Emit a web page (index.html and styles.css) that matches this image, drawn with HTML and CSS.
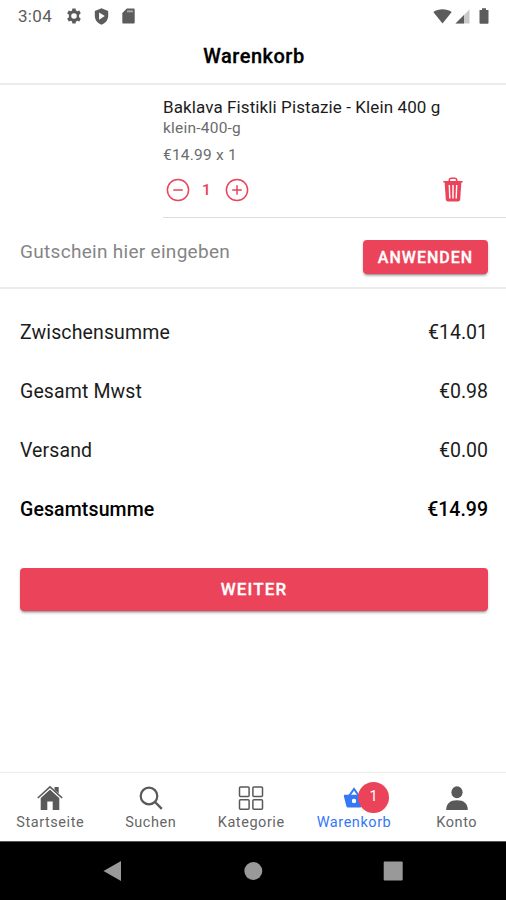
FILE: index.html
```html
<!DOCTYPE html>
<html lang="de">
<head>
<meta charset="utf-8">
<meta name="viewport" content="width=device-width">
<title>Warenkorb</title>
<link rel="stylesheet" href="styles.css">
</head>
<body>
<div class="screen">
  <div class="status">
    <span class="time">3:04</span>
    <svg class="s-gear" width="16" height="16" viewBox="0 0 16 16"><path fill-rule="evenodd" d="M6.4.5h3.2l.4 2.1 1.2.7 2-.8 1.6 2.8-1.7 1.4v2.6l1.7 1.4-1.6 2.8-2-.8-1.2.7-.4 2.1H6.400l-.4-2.100-1.200-.7-2 .8-1.600-2.800 1.700-1.400V6.700L1.200 5.300l1.600-2.800 2 .8L6 2.600zM8 5.200a2.800 2.800 0 1 0 0 5.600 2.800 2.800 0 0 0 0-5.600z"/></svg>
    <svg class="s-shield" width="15" height="17" viewBox="0 0 15 17"><path fill-rule="evenodd" d="M7.500.3l6.700 2.700v4.800c0 4-2.600 7.400-6.700 8.900C3.400 15.200.8 11.800.8 7.800V3zM5.100 4.400v7.300l5.700-3.600z"/></svg>
    <svg class="s-card" width="13" height="16" viewBox="0 0 13 16"><path fill-rule="evenodd" d="M4.800.5h6.700c.8 0 1.200.4 1.200 1.200v12.600c0 .8-.4 1.200-1.200 1.200h-10c-.8 0-1.200-.4-1.200-1.200V5z"/><path d="M5 2.400h6v1.900H5z" fill="#a8a8a8"/></svg>
    <span class="grow"></span>
    <svg class="s-wifi" width="19" height="15" viewBox="0 0 19 15"><path d="M.3 3C5.500-.6 13.500-.6 18.700 3L9.500 14.500z"/></svg>
    <svg class="s-signal" width="15" height="15" viewBox="0 0 15 15"><path d="M14.500.5v14H.5z" fill="#c9c9c9"/><path d="M9 6v8.500H.5z"/></svg>
    <svg class="s-battery" width="10" height="16" viewBox="0 0 10 16"><path d="M3 .3h4V2h2.500v12.800c0 .5-.3.900-.9.900H1.400c-.6 0-.9-.4-.9-.9V2H3z"/></svg>
  </div>
  <header class="header"><h1>Warenkorb</h1></header>
  <main>
    <section class="item">
      <div class="item-name">Baklava Fistikli Pistazie - Klein 400 g</div>
      <div class="item-variant">klein-400-g</div>
      <div class="item-price">€14.99 x 1</div>
      <div class="controls">
        <svg class="ring" width="24" height="24" viewBox="0 0 24 24"><circle cx="12" cy="12" r="10.600"/><path d="M7.200 12h9.600"/></svg>
        <span class="qty">1</span>
        <svg class="ring" width="24" height="24" viewBox="0 0 24 24"><circle cx="12" cy="12" r="10.600"/><path d="M7.200 12h9.600M12 7.200v9.600"/></svg>
        <span class="grow"></span>
        <svg class="trash" width="20" height="25" viewBox="0 0 20 25"><path d="M.3 4.700h19.400M6.300 4.500V3c0-1 .6-1.700 1.600-1.700h4.200c1 0 1.600.7 1.600 1.700v1.500" fill="none" stroke="#eb445a" stroke-width="1.600"/><path d="M1.600 5h16.800l-1.200 17.300c-.1 1.300-.9 2.100-2.200 2.100H5c-1.300 0-2.100-.8-2.200-2.100z" fill="#eb445a"/><path d="M6.300 8l.5 13.500M10 8v13.500M13.700 8l-.5 13.500" stroke="#fff" stroke-width="1.400" fill="none"/></svg>
      </div>
    </section>
    <section class="voucher">
      <span class="placeholder">Gutschein hier eingeben</span>
      <button class="btn apply">ANWENDEN</button>
    </section>
    <section class="totals">
      <div class="row"><span>Zwischensumme</span><span class="amount">€14.01</span></div>
      <div class="row"><span>Gesamt Mwst</span><span class="amount">€0.98</span></div>
      <div class="row"><span>Versand</span><span class="amount">€0.00</span></div>
      <div class="row total"><span>Gesamtsumme</span><span class="amount">€14.99</span></div>
    </section>
    <button class="btn next">WEITER</button>
  </main>
  <nav class="tabs">
    <div class="tab">
      <svg width="26" height="26" viewBox="0 0 26 26"><path d="M17.500 2h4.200v7l-4.200-3.800z"/><path d="M13 4.600l9.300 8.500V25h-6.600v-8.400h-5.400V25H3.700V13.100z"/><path d="M.8 13.500L13 2.600l12.200 10.900" fill="none" stroke="#fff" stroke-width="2.600"/><path d="M.8 13L13 1.900 25.200 13" fill="none" stroke="#595959" stroke-width="1.600"/></svg>
      <span>Startseite</span>
    </div>
    <div class="tab">
      <svg width="26" height="26" viewBox="0 0 26 26"><circle cx="11" cy="11" r="8.300" fill="none" stroke="#595959" stroke-width="2.200"/><path d="M17 17l6.800 6.800" stroke="#595959" stroke-width="2.400"/></svg>
      <span>Suchen</span>
    </div>
    <div class="tab">
      <svg width="26" height="26" viewBox="0 0 26 26"><g fill="none" stroke="#595959" stroke-width="1.500"><rect x="1.500" y="1.900" width="9.600" height="9.600" rx="1"/><rect x="14.900" y="1.900" width="9.600" height="9.600" rx="1"/><rect x="1.500" y="14.700" width="9.600" height="9.600" rx="1"/><rect x="14.900" y="14.700" width="9.600" height="9.600" rx="1"/></g></svg>
      <span>Kategorie</span>
    </div>
    <div class="tab wide active">
      <div class="basket">
        <svg width="26" height="26" viewBox="0 0 26 26"><path d="M8 11l5-7 5 7" fill="none" stroke="#3478f6" stroke-width="2"/><path fill-rule="evenodd" d="M3.800 9.800h18.400c.8 0 1.200.6 1 1.300L20.700 21c-.3 1-1 1.600-2 1.600H7.300c-1 0-1.700-.6-2-1.600L2.800 11.100c-.2-.7.200-1.300 1-1.300zM13 13.800a2.200 2.200 0 1 0 0 4.400 2.200 2.200 0 0 0 0-4.400z"/></svg>
        <b class="badge">1</b>
      </div>
      <span>Warenkorb</span>
    </div>
    <div class="tab">
      <svg width="26" height="26" viewBox="0 0 26 26"><ellipse cx="13" cy="7.200" rx="5.600" ry="6"/><path d="M2.200 25c0-6.600 4-9.800 10.800-9.800S23.800 18.400 23.800 25z"/></svg>
      <span>Konto</span>
    </div>
  </nav>
  <div class="sysnav">
    <svg width="20" height="22" viewBox="0 0 20 22"><path d="M18 1v20L.5 11z"/></svg>
    <svg width="20" height="22" viewBox="0 0 20 22"><circle cx="10.300" cy="11" r="9"/></svg>
    <svg width="20" height="22" viewBox="0 0 20 22"><rect x=".7" y="1.500" width="19" height="19" rx="1"/></svg>
  </div>
</div>
</body>
</html>
```
FILE: styles.css
```css
* { box-sizing: border-box; }
body { margin: 0; font-family: Roboto, sans-serif; color: #1c1c1c; background: #fff; }
svg { display: block; flex: none; }
.screen { width: 506px; height: 900px; display: flex; flex-direction: column; overflow: hidden; }
.grow { flex: 1; }
.status { height: 32px; display: flex; align-items: center; padding: 0 17px 0 18px; color: #5c5c5c; fill: #5c5c5c; }
.time { width: 48px; font-size: 17px; letter-spacing: 0.3px; }
.s-shield { margin-left: 12px; }
.s-card { margin-left: 13px; }
.s-signal { margin-left: 3px; }
.s-battery { margin-left: 9px; }
.header { height: 53px; border-bottom: 2px solid #ececec; display: flex; align-items: center; justify-content: center; }
h1 { margin: 0; padding: 0 0 3px 2px; font-size: 20px; line-height: 24px; font-weight: 500; letter-spacing: 0.5px; color: #000; -webkit-text-stroke: 0.3px #000; }
main { flex: 1; }
.item { margin-left: 163px; height: 133px; border-bottom: 1px solid #dcdcdc; padding-top: 10px; }
.item-name { font-size: 17px; line-height: 24px; white-space: nowrap; letter-spacing: 0.1px; }
.item-variant { font-size: 15.500px; line-height: 19px; color: #6c6c6c; letter-spacing: 0.22px; }
.item-price { margin-top: 7px; font-size: 15.500px; line-height: 20px; color: #6c6c6c; letter-spacing: 0.22px; }
.controls { display: flex; align-items: center; height: 25px; margin-top: 12px; padding: 0 43px 0 3px; color: #eb445a; }
.ring { fill: none; stroke: #eb445a; stroke-width: 1.500; }
.qty { width: 35px; padding-right: 2px; text-align: center; font-size: 15.500px; font-weight: 500; }
.voucher { height: 71px; border-bottom: 2px solid #ececec; display: flex; justify-content: space-between; padding: 22px 18px 0 20px; }
.placeholder { font-size: 19px; line-height: 24px; color: #858585; letter-spacing: 0.3px; }
.btn { border: 0; padding: 0; font-family: inherit; background: #eb445a; color: #fff; border-radius: 4px; font-weight: 500; -webkit-text-stroke: 0.3px #fff; display: flex; align-items: center; justify-content: center; box-shadow: 0 3px 2px -2px rgba(0,0,0,.3), 0 2px 3px rgba(0,0,0,.2); }
.apply { width: 125px; height: 34px; font-size: 16px; letter-spacing: 1px; }
.totals { padding: 14px 18px 0 20px; }
.row { height: 59px; display: flex; align-items: center; justify-content: space-between; font-size: 19.500px; letter-spacing: 0.12px; }
.amount { letter-spacing: 0; }
.total { font-weight: 500; color: #000; }
.next { width: 468px; height: 43px; margin: 29px 0 0 20px; padding-bottom: 2px; font-size: 17px; letter-spacing: 1.100px; }
.tabs { height: 69px; border-top: 1px solid #ececec; display: flex; fill: #595959; color: #666; }
.tab { flex: 0 0 100.500px; display: flex; flex-direction: column; align-items: center; padding-top: 12px; font-size: 14.500px; line-height: 24px; letter-spacing: 0.55px; }
.wide { flex-basis: 105px; }
.active { color: #3478f6; fill: #3478f6; }
.basket { position: relative; }
.badge { position: absolute; left: 17px; top: -3px; width: 31px; height: 31px; border-radius: 50%; background: #eb445a; color: #fff; font-size: 14.500px; font-weight: 400; line-height: 29px; text-align: center; letter-spacing: 0; }
.sysnav { height: 59px; background: #000; border-top: 1px solid #555; display: flex; align-items: center; justify-content: center; gap: 120px; fill: #999; }
```
